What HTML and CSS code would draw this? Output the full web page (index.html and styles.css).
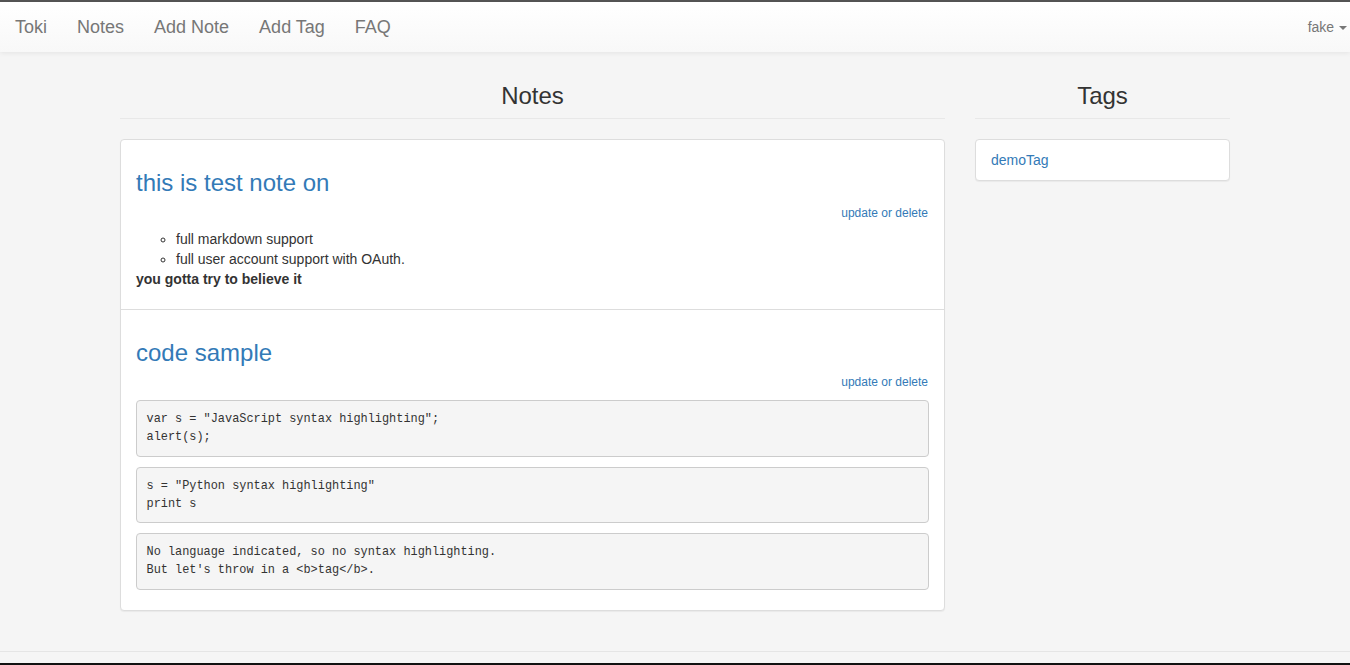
FILE: index.html
```html
<!DOCTYPE html>
<html lang="en">
<head>
<meta charset="utf-8">
<title>Toki</title>
<link rel="stylesheet" href="styles.css">
</head>
<body>
<div class="topline"></div>
<nav class="navbar">
  <div class="nav-left">
    <a class="brand" href="#">Toki</a>
    <a class="nav-link" href="#">Notes</a>
    <a class="nav-link" href="#">Add Note</a>
    <a class="nav-link" href="#">Add Tag</a>
    <a class="nav-link" href="#">FAQ</a>
  </div>
  <div class="nav-right">
    <a class="user" href="#">fake <span class="caret"></span></a>
  </div>
</nav>

<main class="container">
  <section class="col-notes">
    <div class="page-header"><h3>Notes</h3></div>
    <div class="panel">
      <div class="item">
        <h3 class="note-title"><a href="#">this is test note on</a></h3>
        <div class="actions"><a href="#">update</a> or <a href="#">delete</a></div>
        <ul class="note-list">
          <li>full markdown support</li>
          <li>full user account support with OAuth.</li>
        </ul>
        <p class="note-bold"><strong>you gotta try to believe it</strong></p>
      </div>
      <div class="item">
        <h3 class="note-title"><a href="#">code sample</a></h3>
        <div class="actions actions-code"><a href="#">update</a> or <a href="#">delete</a></div>
        <pre>var s = "JavaScript syntax highlighting";
alert(s);</pre>
        <pre>s = "Python syntax highlighting"
print s</pre>
        <pre>No language indicated, so no syntax highlighting.
But let's throw in a &lt;b&gt;tag&lt;/b&gt;.</pre>
      </div>
    </div>
  </section>
  <aside class="col-tags">
    <div class="page-header"><h3>Tags</h3></div>
    <div class="panel">
      <div class="item tag-item"><a href="#">demoTag</a></div>
    </div>
  </aside>
</main>

<footer class="footer"></footer>
<div class="bottomline"></div>
</body>
</html>
```

FILE: styles.css
```css
* { box-sizing: border-box; }

html, body {
  margin: 0;
  padding: 0;
}

body {
  background: #f5f5f5;
  font-family: "Liberation Sans", Arial, Helvetica, sans-serif;
  font-size: 14px;
  line-height: 20px;
  color: #333;
  overflow: hidden;
}

a {
  color: #337ab7;
  text-decoration: none;
}

.topline {
  height: 2px;
  background: #555;
}

.navbar {
  height: 50px;
  display: flex;
  justify-content: space-between;
  align-items: center;
  background: linear-gradient(to bottom, #ffffff 0%, #f8f8f8 100%);
  box-shadow: 0 1px 5px rgba(0, 0, 0, 0.075);
  position: relative;
  z-index: 1;
}

.nav-left {
  display: flex;
  align-items: center;
}

.brand {
  font-size: 18px;
  line-height: 50px;
  color: #777;
  padding: 0 15px;
}

.nav-link {
  font-size: 18px;
  line-height: 50px;
  color: #777;
  padding: 0 15px;
}

.nav-right {
  padding-right: 3px;
}

.user {
  font-size: 14px;
  line-height: 50px;
  color: #777;
}

.caret {
  display: inline-block;
  width: 0;
  height: 0;
  margin-left: 1px;
  vertical-align: middle;
  border-top: 4px solid #777;
  border-left: 4px solid transparent;
  border-right: 4px solid transparent;
}

.container {
  width: 1110px;
  margin: 0 auto;
  display: flex;
  gap: 30px;
  align-items: flex-start;
}

.col-notes { width: 825px; }
.col-tags { width: 255px; }

.page-header {
  margin-top: 31px;
  padding-bottom: 9px;
  border-bottom: 1px solid #e8e8e8;
  margin-bottom: 20px;
  text-align: center;
}

.page-header h3 {
  margin: 0;
  font-size: 24px;
  line-height: 26.4px;
  font-weight: 500;
  color: #333;
}

.panel {
  background: #fff;
  border: 1px solid #ddd;
  border-radius: 4px;
  box-shadow: 0 1px 1px rgba(0, 0, 0, 0.05);
}

.item {
  padding: 10px 15px;
}

.item + .item {
  border-top: 1px solid #ddd;
}

.note-title {
  margin: 20px 0 8px;
  font-size: 24px;
  line-height: 26.4px;
  font-weight: 500;
}

.actions {
  text-align: right;
  padding-right: 1px;
  font-size: 12px;
  line-height: 17px;
  color: #337ab7;
}

.note-list {
  margin: 7px 0 0;
  padding-left: 40px;
  list-style-type: circle;
}

.note-bold {
  margin: 0 0 10px;
}

.actions-code {
  margin-bottom: 9px;
}

pre {
  margin: 0 0 10px;
  padding: 9px 9.5px;
  background: #f5f5f5;
  border: 1px solid #ccc;
  border-radius: 4px;
  font-family: "Liberation Mono", Consolas, monospace;
  font-size: 11.9px;
  line-height: 18.25px;
  color: #333;
  white-space: pre;
}

.tag-item {
  padding: 10px 15px;
}

.footer {
  margin-top: 40px;
  height: 12px;
  border-top: 1px solid #e5e5e5;
}

.bottomline {
  height: 2px;
  background: #111;
}
```
